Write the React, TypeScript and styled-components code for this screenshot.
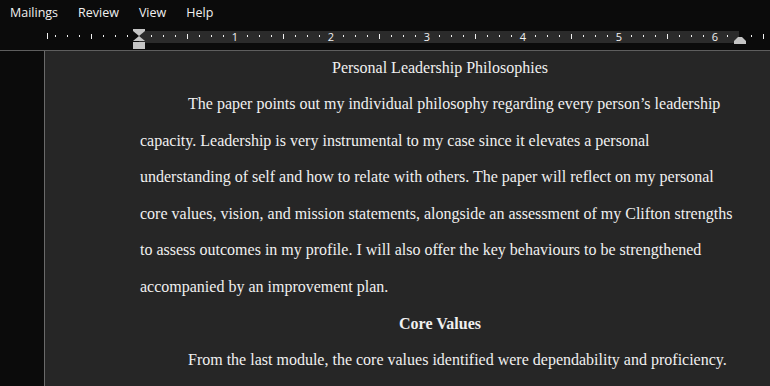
import styled, { createGlobalStyle } from "styled-components";

const MENU = ["Mailings", "Review", "View", "Help"];

// ruler: zero at x=139, one inch = 96px, ticks every 1/8 inch
const ZERO = 139;
const INCH = 96;

const PARAGRAPHS = [
  "The paper points out my individual philosophy regarding every person\u2019s leadership capacity. Leadership is very instrumental to my case since it elevates a personal understanding of self and how to relate with others. The paper will reflect on my personal core values, vision, and mission statements, alongside an assessment of my Clifton strengths to assess outcomes in my profile. I will also offer the key behaviours to be strengthened accompanied by an improvement plan.",
];

function RulerDrawing() {
  const ticks = [];
  for (let i = -8; i <= 52; i++) {
    const x = ZERO + i * 12;
    if (x < 40 || x > 770) continue;
    if (i === 0 || i === 50) continue;
    if (i % 8 === 0) {
      if (i < 0) {
        ticks.push(<rect key={i} x={x + 4} y={4} width={1} height={6} fill="#f2f2f2" />);
      } else {
        ticks.push(
          <text
            key={i}
            x={x}
            y={12}
            fill="#f2f2f2"
            fontSize="11"
            fontFamily="'Open Sans', sans-serif"
            textAnchor="middle"
          >
            {i / 8}
          </text>
        );
      }
    } else if (i % 4 === 0) {
      ticks.push(<rect key={i} x={x} y={5} width={1} height={5} fill="#f2f2f2" />);
    } else {
      ticks.push(<rect key={i} x={x} y={6} width={1} height={2} fill="#f2f2f2" />);
    }
  }
  return (
    <svg width="770" height="21" viewBox="0 0 770 21">
      <rect x={ZERO} y={2} width={INCH * 6.25} height={12} fill="#2b2b2b" />
      {ticks}
      {/* first line / hanging indent marker */}
      <path d="M133 0 H145 V2 L139 7 L133 2 Z" fill="#c4c4c4" />
      <path d="M139 7 L145 12 H133 Z" fill="#c4c4c4" />
      <rect x={133} y={13} width={12} height={7} fill="#c4c4c4" />
      {/* right indent marker */}
      <path d="M734 15 V12 L738 8 H742 L746 12 V15 Z" fill="#c4c4c4" />
    </svg>
  );
}

export default function App() {
  return (
    <>
      <GlobalStyle />
      <Window>
        <MenuBar>
          {MENU.map((item) => (
            <MenuItem key={item}>{item}</MenuItem>
          ))}
        </MenuBar>
        <RulerBar>
          <RulerDrawing />
        </RulerBar>
        <Workspace>
          <Gutter />
          <Page>
            <TextColumn>
              <Heading>Personal Leadership Philosophies</Heading>
              {PARAGRAPHS.map((p, i) => (
                <Para key={i}>{p}</Para>
              ))}
              <Heading bold>Core Values</Heading>
              <Para>
                From the last module, the core values identified were dependability and proficiency.
              </Para>
            </TextColumn>
          </Page>
        </Workspace>
      </Window>
    </>
  );
}

const GlobalStyle = createGlobalStyle`
  html, body {
    margin: 0;
    padding: 0;
    background: #0b0b0b;
    overflow: hidden;
  }
`;

const Window = styled.div`
  width: 770px;
  height: 386px;
  display: flex;
  flex-direction: column;
  background: #0b0b0b;
  overflow: hidden;
`;

const MenuBar = styled.div`
  height: 29px;
  display: flex;
  align-items: flex-start;
  gap: 20px;
  padding: 4px 0 0 10px;
  box-sizing: border-box;
  font-family: "Open Sans", "Noto Sans", sans-serif;
  font-size: 12.5px;
  color: #f0f0f0;
`;

const MenuItem = styled.span`
  line-height: 18px;
`;

const RulerBar = styled.div`
  height: 21px;
  border-bottom: 1px solid #5e5e5e;
  svg {
    display: block;
  }
`;

const Workspace = styled.div`
  flex: 1;
  display: flex;
`;

const Gutter = styled.div`
  width: 44px;
  background: #0b0b0b;
  border-right: 1px solid #6a6a6a;
`;

const Page = styled.div`
  flex: 1;
  background: #262626;
  padding-left: 95px;
`;

const TextColumn = styled.div`
  width: 600px;
  margin-top: -1.5px;
  font-family: "Liberation Serif", "Times New Roman", serif;
  font-size: 16px;
  line-height: 36.6px;
  color: #f0f0f0;
`;

const Heading = styled.div<{ bold?: boolean }>`
  text-align: center;
  font-weight: ${(p) => (p.bold ? 700 : 400)};
`;

const Para = styled.p`
  margin: 0;
  text-indent: 48px;
`;
